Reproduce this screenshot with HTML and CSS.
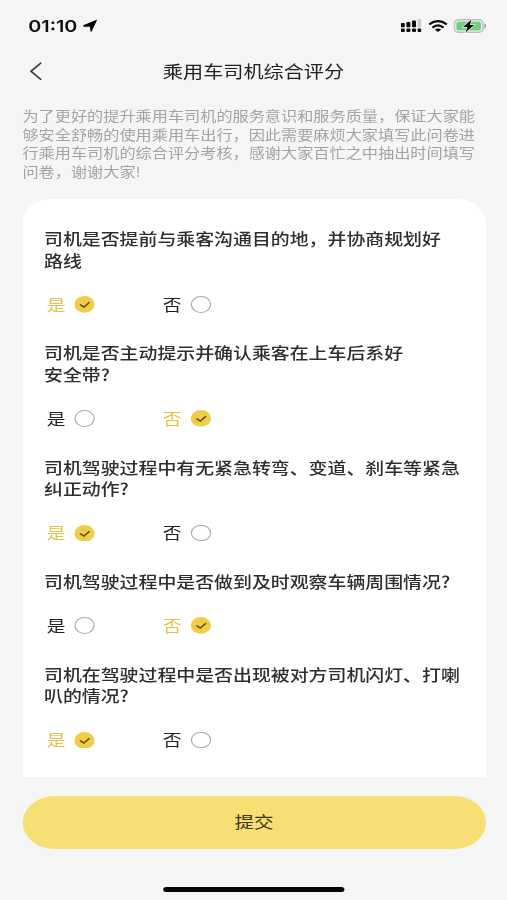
FILE: index.html
```html
<!DOCTYPE html>
<html lang="zh-CN">
<head>
<meta charset="utf-8">
<title>乘用车司机综合评分</title>
<link rel="stylesheet" href="styles.css">
</head>
<body>
<div class="screen">
  <header class="status">
    <span class="time">01:10</span>
    <svg class="locate" viewBox="0 0 15 15" preserveAspectRatio="none"><path d="M0.5 7.2 L14.5 0.5 L8.8 14.3 Q8.1 15 7.6 14.2 L7.2 8.9 L0.9 9 Q-.2 8.2 .5 7.2Z"/></svg>
    <svg class="signal" viewBox="0 0 21 13" preserveAspectRatio="none">
      <g fill="#0a0a0a"><rect x="0" y="4" width="4" height="4.2" rx="1"/><rect x="5.6" y="3" width="4" height="5.2" rx="1"/><rect x="11.2" y="1.5" width="4" height="6.7" rx="1"/><rect x="0" y="9.6" width="4" height="3.4" rx="1"/><rect x="5.6" y="9.6" width="4" height="3.4" rx="1"/><rect x="11.2" y="9.6" width="4" height="3.4" rx="1"/><rect x="16.8" y="9.6" width="4" height="3.4" rx="1"/></g>
      <rect x="16.8" y="0" width="4" height="8.2" rx="1" fill="#ccc"/>
    </svg>
    <svg class="wifi" viewBox="0 0 20 13" preserveAspectRatio="none">
      <g fill="none" stroke="#0a0a0a" stroke-width="2.4"><path d="M.8 4.8 Q10 -2.2 19.2 4.8"/><path d="M4.2 8.3 Q10 3.4 15.8 8.3"/></g>
      <path d="M6.8 10.4 Q10 7.8 13.2 10.4 L10 13Z"/>
    </svg>
    <svg class="battery" viewBox="0 0 33 14" preserveAspectRatio="none">
      <rect x=".8" y=".8" width="28.8" height="12.4" rx="4" fill="#f5f5f5" stroke="#bdbdbd" stroke-width="1.6"/>
      <rect x="2.8" y="2.5" width="24.8" height="9" rx="2" fill="#72cf7b"/>
      <path d="M30.9 4.5 Q33 5 33 7 Q33 9 30.9 9.5Z" fill="#aaa"/>
      <path d="M18 .6 L9.6 8 H14 L12 13.6 L20.8 6 H16.4Z" fill="#0a0a0a" stroke="#e9f7e9" stroke-width="1.4" paint-order="stroke"/>
    </svg>
  </header>
  <nav class="nav">
    <svg class="back" viewBox="0 0 10 18" preserveAspectRatio="none"><path d="M9.3 .8 L.9 9 L9.3 17.2"/></svg>
    <h1>乘用车司机综合评分</h1>
  </nav>
  <p class="intro">为了更好的提升乘用车司机的服务意识和服务质量，保证大家能<br>够安全舒畅的使用乘用车出行，因此需要麻烦大家填写此问卷进<br>行乘用车司机的综合评分考核，感谢大家百忙之中抽出时间填写<br>问卷，谢谢大家!</p>
  <main class="card">
    <section class="item">
      <h2>司机是否提前与乘客沟通目的地，并协商规划好<br>路线</h2>
      <div class="options"><span class="option on">是<svg viewBox="0 0 16 16"><circle cx="8" cy="8" r="8"/><path d="M4.4 8 L7.5 10.6 L12 5.9"/></svg></span><span class="option">否<i></i></span></div>
    </section>
    <section class="item">
      <h2>司机是否主动提示并确认乘客在上车后系好<br>安全带?</h2>
      <div class="options"><span class="option">是<i></i></span><span class="option on">否<svg viewBox="0 0 16 16"><circle cx="8" cy="8" r="8"/><path d="M4.4 8 L7.5 10.6 L12 5.9"/></svg></span></div>
    </section>
    <section class="item">
      <h2>司机驾驶过程中有无紧急转弯、变道、刹车等紧急<br>纠正动作?</h2>
      <div class="options"><span class="option on">是<svg viewBox="0 0 16 16"><circle cx="8" cy="8" r="8"/><path d="M4.4 8 L7.5 10.6 L12 5.9"/></svg></span><span class="option">否<i></i></span></div>
    </section>
    <section class="item">
      <h2>司机驾驶过程中是否做到及时观察车辆周围情况?</h2>
      <div class="options"><span class="option">是<i></i></span><span class="option on">否<svg viewBox="0 0 16 16"><circle cx="8" cy="8" r="8"/><path d="M4.4 8 L7.5 10.6 L12 5.9"/></svg></span></div>
    </section>
    <section class="item">
      <h2>司机在驾驶过程中是否出现被对方司机闪灯、打喇<br>叭的情况?</h2>
      <div class="options"><span class="option on">是<svg viewBox="0 0 16 16"><circle cx="8" cy="8" r="8"/><path d="M4.4 8 L7.5 10.6 L12 5.9"/></svg></span><span class="option">否<i></i></span></div>
    </section>
  </main>
  <button class="submit" type="button">提交</button>
  <div class="home"></div>
</div>
</body>
</html>
```
FILE: styles.css
```css
* { box-sizing: border-box; }
html, body { margin: 0; height: 900px; overflow: hidden; background: #f5f5f5; }

.screen {
  width: 422.5px;
  height: 900px;
  display: flex;
  flex-direction: column;
  transform: scaleX(1.2);
  transform-origin: 0 0;
  font-family: Inter, "Noto Sans CJK SC", sans-serif;
  color: #333;
}

.status {
  height: 50px;
  padding: 1px 17.4px 0 23.5px;
  display: flex;
  align-items: center;
}
.status svg { display: block; }
.time { font: 600 16.5px/20px Inter, sans-serif; color: #111; width: 41px; white-space: nowrap; }
.locate { width: 12.5px; height: 13px; margin-left: 4.5px; margin-right: auto; }
.signal { width: 17.5px; height: 13px; margin-right: 5.6px; }
.wifi { width: 16px; height: 12px; margin-right: 4.8px; }
.battery { width: 27.3px; height: 14px; }

.nav {
  height: 42px;
  padding-left: 25px;
  display: grid;
  grid-template-columns: 12px 1fr 37px;
  align-items: center;
}
.back { width: 10px; height: 18.5px; fill: none; stroke: #333; stroke-width: 1.5; }
.nav h1 { margin: 0; text-align: center; font: 400 16.8px/24px "Noto Sans CJK SC", sans-serif; color: #222; }

.intro {
  margin: 14px 0 0 18.7px;
  height: 93px;
  font: 400 13.48px/18.6px "Noto Sans CJK SC", sans-serif;
  color: #a3a3a3;
  white-space: nowrap;
}

.card {
  margin: 0 17.9px 0 18.7px;
  height: 578px;
  padding: 29px 0 0 18px;
  background: #fff;
  border-radius: 24px 24px 0 0;
  overflow: hidden;
}
.item { padding-bottom: 28.1px; }
.item h2 { margin: 0; font: 500 15.75px/21.6px "Noto Sans CJK SC", sans-serif; white-space: nowrap; color: #2e2e2e; }
.options { display: flex; height: 20px; margin-top: 23px; padding-left: 2.2px; }
.option {
  width: 96.8px;
  display: flex;
  align-items: center;
  gap: 7.7px;
  font: 400 15.6px/18px "Noto Sans CJK SC", sans-serif;
  padding-bottom: 1px;
  color: #222;
}
.option.on { color: #e5c04e; }
.option i, .option svg { width: 16.8px; height: 16.8px; margin-top: 1.6px; }
.option i { border: 1.2px solid #aaa; border-radius: 50%; }
.option svg { fill: #efcd48; }
.option path { fill: none; stroke: #5e4a12; stroke-width: 1.3; }

.submit {
  margin: 18.5px 17.9px 0 18.7px;
  height: 53px;
  padding: 0 0 2px;
  border: 0;
  border-radius: 27px;
  background: #f7df74;
  color: #40360f;
  font: 400 16.3px/51px "Noto Sans CJK SC", sans-serif;
}
.home { width: 151px; height: 5px; margin: 38.5px auto 0; border-radius: 3px; background: #000; }
```
